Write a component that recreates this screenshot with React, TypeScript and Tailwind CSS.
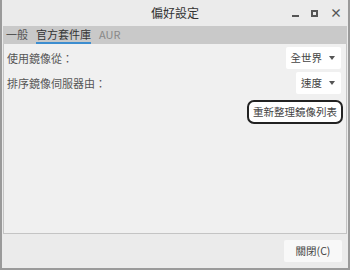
const font = { fontFamily: '"Noto Sans CJK TC", "Noto Sans", sans-serif' };

function Combo({ label }: { label: string }) {
  return (
    <div className="flex h-[22px] items-center gap-[7px] rounded-[2px] bg-white pl-[5px] pr-[6px] text-[10.5px] text-[#444]">
      <span>{label}</span>
      <span className="h-0 w-0 border-x-[3px] border-t-[4px] border-x-transparent border-t-[#555]" />
    </div>
  );
}

export default function App() {
  return (
    <div
      className="flex h-[270px] w-[350px] flex-col border-2 border-t-0 border-[#9a9a9a] bg-[#ebebeb] text-[#333]"
      style={font}
    >
      {/* title bar */}
      <div className="relative flex h-[26px] items-center justify-center">
        <span className="text-[12px] text-[#333]">偏好設定</span>
        <div className="absolute right-[6px] top-[7px] flex items-center gap-[12px] text-[#555]">
          <span className="mt-[6px] h-[2px] w-[7px] bg-[#555]" />
          <span className="h-[7px] w-[7px] border-2 border-[#555]" />
          <span className="text-[12px] font-bold leading-none">×</span>
        </div>
      </div>

      {/* tabs + content */}
      <div className="mx-[1px] flex flex-1 flex-col">
        <div className="flex h-[18px] items-end gap-[8px] bg-[#c9c9c9] px-[3px] text-[11px]">
          <span className="pb-[2px] text-[#555]">一般</span>
          <span className="border-b-2 border-[#3d8ed0] text-[#333]">官方套件庫</span>
          <span className="pb-[2px] text-[#888]">AUR</span>
        </div>
        <div className="flex h-[190px] flex-col border border-t-0 border-[#c4c4c4] bg-[#f0f0f0] px-[3px] pt-[2px] text-[11px] text-[#555]">
          <div className="flex items-center justify-between py-[1px] pr-[2px]">
            <span>使用鏡像從：</span>
            <Combo label="全世界" />
          </div>
          <div className="mt-[2px] flex items-center justify-between pr-[2px]">
            <span>排序鏡像伺服器由：</span>
            <Combo label="速度" />
          </div>
          <div className="mt-[6px] flex justify-end">
            <button className="h-[24px] rounded-[7px] border-2 border-[#222] bg-white px-[4px] text-[10.5px] text-[#444]">
              重新整理鏡像列表
            </button>
          </div>
        </div>
      </div>

      <div className="flex h-[34px] items-center justify-end pr-[6px]">
        <button className="h-[22px] w-[58px] rounded-[2px] bg-[#f8f8f8] text-[10.5px] text-[#444]">
          關閉(C)
        </button>
      </div>
    </div>
  );
}
